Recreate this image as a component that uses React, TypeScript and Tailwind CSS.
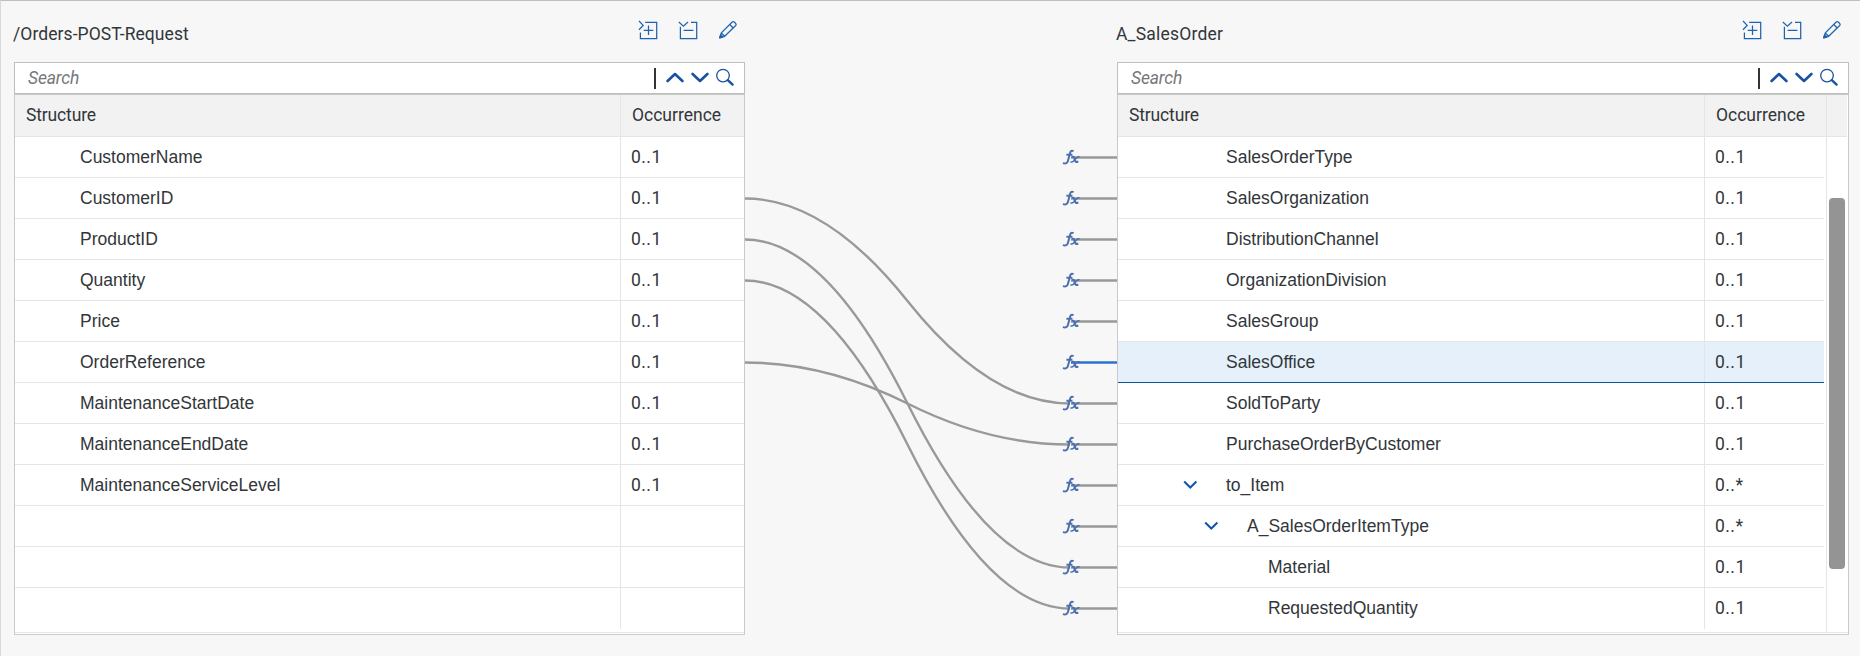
import React from "react";

type Item = { name: string; occ: string; indent: number; expanded?: boolean; selected?: boolean };

const source: Item[] = [
  "CustomerName", "CustomerID", "ProductID", "Quantity", "Price", "OrderReference",
  "MaintenanceStartDate", "MaintenanceEndDate", "MaintenanceServiceLevel", "", "", "",
].map((name) => ({ name, occ: name ? "0..1" : "", indent: 65 }));

const target: Item[] = [
  { name: "SalesOrderType", occ: "0..1", indent: 108 },
  { name: "SalesOrganization", occ: "0..1", indent: 108 },
  { name: "DistributionChannel", occ: "0..1", indent: 108 },
  { name: "OrganizationDivision", occ: "0..1", indent: 108 },
  { name: "SalesGroup", occ: "0..1", indent: 108 },
  { name: "SalesOffice", occ: "0..1", indent: 108, selected: true },
  { name: "SoldToParty", occ: "0..1", indent: 108 },
  { name: "PurchaseOrderByCustomer", occ: "0..1", indent: 108 },
  { name: "to_Item", occ: "0..*", indent: 108, expanded: true },
  { name: "A_SalesOrderItemType", occ: "0..*", indent: 129, expanded: true },
  { name: "Material", occ: "0..1", indent: 150 },
  { name: "RequestedQuantity", occ: "0..1", indent: 150 },
];

const links: [number, number][] = [[1, 6], [2, 10], [3, 11], [5, 7]];
const rowY = (i: number) => 20.5 + i * 41;

function ExpandIcon() {
  return (
    <svg width="20" height="20" viewBox="0 0 20 20" fill="none" stroke="#1f63b0" strokeWidth="1.25">
      <path d="M1 1l4.2 4.4L1 9.8M7.2 2.3h11.5v16.3H2.4v-6M5.7 10.3h9.6M10.5 5.5v9.6" />
    </svg>
  );
}

function CollapseIcon() {
  return (
    <svg width="20" height="20" viewBox="0 0 20 20" fill="none" stroke="#1f63b0" strokeWidth="1.25">
      <path d="M.8 2l4.6 4.1L10 2M13 2.3h5.7v16.3H2.4V6.8M5.6 10.3h9.8" />
    </svg>
  );
}

function PencilIcon() {
  return (
    <svg width="20" height="20" viewBox="0 0 20 20" fill="none" stroke="#1f63b0" strokeWidth="1.25" strokeLinejoin="round">
      <path d="M1.7 17.8l1.6-4.9L14.2 2q1-.9 2 0l1.5 1.5q.9 1 0 2L6.7 16.3zM11.7 4.5l3.5 3.5M3.3 12.9l3.4 3.4" />
      <path d="M1.7 17.8l1-3 2 2z" fill="#1f63b0" />
    </svg>
  );
}

function SearchBar() {
  return (
    <div className="flex h-8 shrink-0 items-center border border-[#bfbfbf] bg-white pr-2 pl-[13px]">
      <span className="grow font-[Roboto] text-[17.5px] leading-5 tracking-[-0.15px] text-[#75777a] italic">Search</span>
      <span className="h-[21px] w-0.5 bg-[#32363a]" />
      <svg className="ml-2.5" width="70" height="20" viewBox="0 0 70 20" fill="none" stroke="#1a52a0" strokeWidth="2.6" strokeLinecap="round" strokeLinejoin="round">
        <path d="M1.6 13l7.4-7 7.4 7M26.6 6l7.4 7 7.4-7" />
        <circle cx="57" cy="7.6" r="6.3" strokeWidth="1.3" />
        <path d="M61.8 12.2l4.8 4.4" strokeWidth="2.4" />
      </svg>
    </div>
  );
}

function Panel({ title, items, scroll }: { title: string; items: Item[]; scroll?: boolean }) {
  return (
    <section className={scroll ? "flex w-[732px] flex-col" : "flex w-[731px] flex-col"}>
      <header className="flex h-[61px] shrink-0 items-start justify-between pt-[19px] pr-[7px]">
        <h2 className={scroll ? "-ml-px pt-[3px] font-[Roboto] text-[17.5px] leading-[23px] tracking-[0.2px] text-[#32363a]" : "-ml-px pt-[3px] font-[Roboto] text-[17.5px] leading-[23px] tracking-[0.07px] text-[#32363a]"}>{title}</h2>
        <div className="flex gap-5">
          <ExpandIcon />
          <CollapseIcon />
          <PencilIcon />
        </div>
      </header>
      <SearchBar />
      <div className="flex h-[541px] flex-col border border-[#cacaca] border-t-[#c8c8c8] bg-white">
        <div className="flex h-[538px] border-b border-[#e5e5e5]">
          <div className={scroll ? "w-[708px]" : "w-[729px]"}>
            <div className="flex h-[42px] items-center border-b border-[#e5e5e5] bg-[#f2f2f2] font-[Roboto] text-[17.5px] text-[#32363a]">
              <span className="grow pl-[11px] tracking-[-0.15px]">Structure</span>
              <span className={scroll ? "flex h-full w-[122px] items-center border-l border-[#e5e5e5] pl-[11px]" : "flex h-full w-[124px] items-center border-l border-[#e5e5e5] pl-[11px]"}>Occurrence</span>
            </div>
            {items.map((it, i) => (
              <div
                key={i}
                className={
                  "flex h-[41px] items-center text-[17.5px] text-[#32363a] " +
                  (scroll ? "mr-0.5 " : "") +
                  (i === 11 ? "" : it.selected ? "border-b border-[#0854a0] bg-[#e5f0fa]" : "border-b border-[#e5e5e5]")
                }
              >
                <span className="flex grow items-center">
                  <span className="flex shrink-0 justify-end" style={{ width: it.indent }}>
                    {it.expanded && (
                      <svg className="mr-[28px]" width="15" height="10" viewBox="0 0 15 10" fill="none" stroke="#0f55a8" strokeWidth="2">
                        <path d="M1.2 1.5l6.1 6 6.1-6" />
                      </svg>
                    )}
                  </span>
                  {it.name}
                </span>
                <span className={scroll ? "flex h-full w-[120px] items-center border-l border-[#e5e5e5] pl-2.5 font-[Roboto] tracking-[0.45px]" : "flex h-full w-[124px] items-center border-l border-[#e5e5e5] pl-2.5 font-[Roboto] tracking-[0.45px]"}>
                  {it.occ}
                </span>
              </div>
            ))}
          </div>
          {scroll && (
            <div className="flex w-[21px] flex-col border-l border-[#e5e5e5]">
              <div className="h-[42px] shrink-0 border-b border-[#e5e5e5] bg-[#f2f2f2]" />
              <div className="mt-[61px] ml-0.5 h-[371px] w-4 rounded bg-[#949494]" />
            </div>
          )}
        </div>
      </div>
    </section>
  );
}

function Links() {
  return (
    <svg className="mt-[136px] shrink-0" width="372" height="492" viewBox="0 0 372 492" fill="none">
      {links.map(([a, b]) => (
        <path
          key={a}
          d={`M0 ${rowY(a)}Q81 ${rowY(a)} 162.5 ${(rowY(a) + rowY(b)) / 2}T325 ${rowY(b)}`}
          stroke="#999"
          strokeWidth="2.4"
        />
      ))}
      {target.map((t, i) => (
        <g key={i}>
          <path d={`M326 ${rowY(i)}H372`} stroke={t.selected ? "#2a72d0" : "#999"} strokeWidth="2.6" />
          <g transform={`translate(317 ${rowY(i) - 8})`} stroke="#4c70ae">
            <path d="M11.6 1.7C9 .4 8.3 2 7.8 4.4L5.9 11.4c-.6 2.4-2 3-5 2.2M4.4 5.2h6" strokeWidth="2" />
            <path d="M9.6 7.2h1.6q1 0 1.5 2.6t1.6 2.6h2" strokeWidth="2.1" />
            <path d="M17.6 7.2h-1.4q-1.2.3-3 2.6t-3.2 2.8h-1.6" strokeWidth="1.5" />
          </g>
        </g>
      ))}
    </svg>
  );
}

export default function App() {
  return (
    <main className="flex h-[656px] w-[1860px] overflow-hidden border-t border-l border-t-[#bfbfbf] border-l-[#d9d9d9] bg-[#f7f7f7] pl-[13px] font-['Liberation_Sans',sans-serif]">
      <Panel title="/Orders-POST-Request" items={source} />
      <Links />
      <Panel title="A_SalesOrder" items={target} scroll />
    </main>
  );
}
